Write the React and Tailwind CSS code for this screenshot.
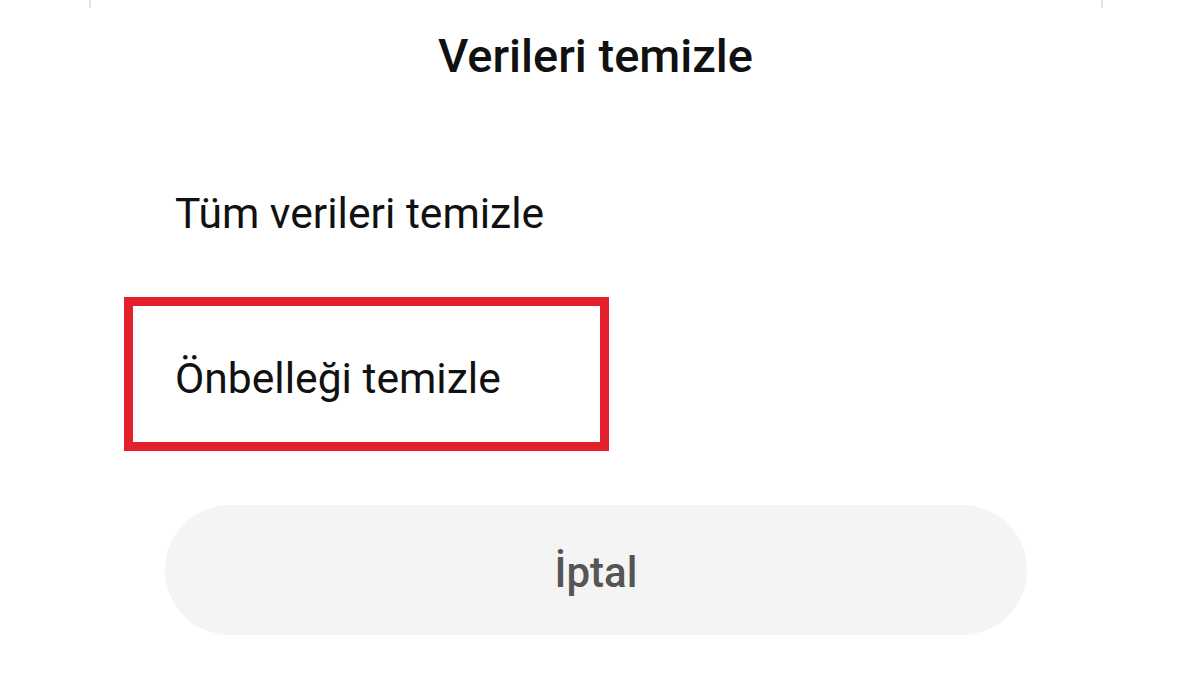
import React from 'react';

const App = () => {
  return (
    <div className="w-[1200px] h-[675px] bg-white overflow-hidden font-['Roboto','Liberation_Sans',sans-serif]">
      {/* Card edge peeking at the top */}
      <div className="ml-[89px] w-[1014px] h-[8px] border-x-2 border-[#e4e4e4]" />

      <div className="flex flex-col">
        <h1 className="mt-[21px] pr-[9px] text-center text-[47px] leading-[54px] font-medium text-[#111111]">
          Verileri temizle
        </h1>

        <div className="mt-[105px] pl-[175px] text-[42.6px] leading-[50px] text-[#111111]">
          Tüm verileri temizle
        </div>

        {/* Highlighted option */}
        <div className="mt-[59px] ml-[124px] w-[485px] h-[154px] border-[9px] border-[#e3202b] pl-[42px] pt-[47px]">
          <div className="text-[42.6px] leading-[50px] text-[#111111]">Önbelleği temizle</div>
        </div>

        <button className="mt-[54px] ml-[165px] w-[862px] h-[130px] rounded-full bg-[#f4f4f4] flex items-center justify-center pt-[5px]">
          <span className="text-[42px] leading-[50px] font-medium text-[#555555]">İptal</span>
        </button>
      </div>
    </div>
  );
};

export default App;
